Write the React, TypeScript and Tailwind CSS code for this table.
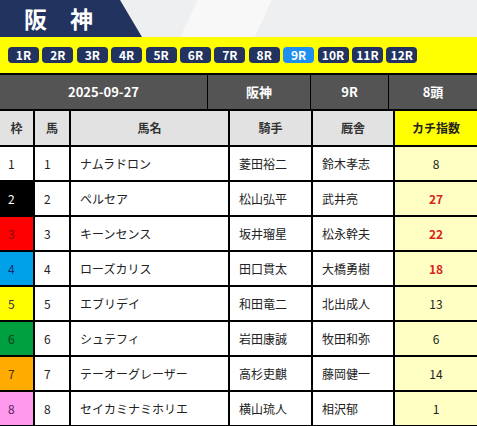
const races = ["1R", "2R", "3R", "4R", "5R", "6R", "7R", "8R", "9R", "10R", "11R", "12R"];

type Horse = {
  waku: number;
  num: number;
  name: string;
  jockey: string;
  trainer: string;
  score: number;
  hot?: boolean;
};

const horses: Horse[] = [
  { waku: 1, num: 1, name: "ナムラドロン", jockey: "菱田裕二", trainer: "鈴木孝志", score: 8 },
  { waku: 2, num: 2, name: "ペルセア", jockey: "松山弘平", trainer: "武井亮", score: 27, hot: true },
  { waku: 3, num: 3, name: "キーンセンス", jockey: "坂井瑠星", trainer: "松永幹夫", score: 22, hot: true },
  { waku: 4, num: 4, name: "ローズカリス", jockey: "田口貫太", trainer: "大橋勇樹", score: 18, hot: true },
  { waku: 5, num: 5, name: "エブリデイ", jockey: "和田竜二", trainer: "北出成人", score: 13 },
  { waku: 6, num: 6, name: "シュテフィ", jockey: "岩田康誠", trainer: "牧田和弥", score: 6 },
  { waku: 7, num: 7, name: "テーオーグレーザー", jockey: "高杉吏麒", trainer: "藤岡健一", score: 14 },
  { waku: 8, num: 8, name: "セイカミナミホリエ", jockey: "横山琉人", trainer: "相沢郁", score: 1 },
];

const wakuStyle: Record<number, string> = {
  1: "bg-white text-[#222]",
  2: "bg-black text-white",
  3: "bg-[#ff0000] text-[#7a1010]",
  4: "bg-[#00a0e9] text-[#14306a]",
  5: "bg-[#ffff00] text-[#333]",
  6: "bg-[#00a040] text-[#0d3b1e]",
  7: "bg-[#ffab00] text-[#4a3200]",
  8: "bg-[#ff99ee] text-[#5a1e55]",
};

const cols = "grid grid-cols-[35px_36px_159px_83px_82px_1fr]";

export default function App() {
  return (
    <div className="w-[477px] h-[426px] overflow-hidden bg-white font-['Noto_Sans_CJK_JP','Noto_Sans',sans-serif]">
      {/* title band */}
      <div className="relative h-[37px] bg-[#eeeff0]">
        <div className="absolute inset-0 bg-[linear-gradient(115deg,transparent_0,transparent_40%,#f8f8f8_40%,#f8f8f8_55%,transparent_55%)]" />
        <div className="absolute inset-0 bg-[#22335f] [clip-path:polygon(0_0,120px_0,142px_100%,0_100%)]" />
        <h1 className="relative pl-[24px] pt-[3px] text-[23px] font-bold leading-[30px] tracking-[1em] text-white">
          阪神
        </h1>
      </div>

      {/* race selector */}
      <div className="flex h-[36px] items-center gap-[3.4px] bg-[#ffff00] pl-[8px]">
        {races.map((r) => (
          <span
            key={r}
            className={`flex h-[16px] w-[31px] items-center justify-center rounded-[4px] text-[12px] font-bold leading-none text-white ${
              r === "9R" ? "bg-[#1e8ff0]" : "bg-[#22335f]"
            }`}
          >
            {r}
          </span>
        ))}
      </div>

      {/* race info */}
      <div className="grid h-[38px] grid-cols-[208px_103px_78px_1fr] border-y-2 border-black bg-[#545454] text-[13px] font-bold text-white">
        <div className="flex items-center justify-center border-r border-black">2025-09-27</div>
        <div className="flex items-center justify-center border-r border-black">阪神</div>
        <div className="flex items-center justify-center border-r border-black">9R</div>
        <div className="flex items-center justify-center">8頭</div>
      </div>

      {/* column header */}
      <div className={`${cols} h-[36px] border-b-2 border-black bg-[#e2e2e2] text-[12px] font-bold text-[#333]`}>
        <div className="flex items-center justify-center border-r-2 border-black">枠</div>
        <div className="flex items-center justify-center border-r-2 border-black">馬</div>
        <div className="flex items-center justify-center border-r-2 border-black">馬名</div>
        <div className="flex items-center justify-center border-r-2 border-black">騎手</div>
        <div className="flex items-center justify-center border-r-2 border-black">厩舎</div>
        <div className="flex items-center justify-center bg-[#ffff00] text-[#222]">カチ指数</div>
      </div>

      {horses.map((h) => (
        <div key={h.num} className={`${cols} h-[35px] border-b-2 border-black text-[12px] text-[#222]`}>
          <div className={`flex items-center border-r-2 border-black pl-[8px] ${wakuStyle[h.waku]}`}>{h.waku}</div>
          <div className="flex items-center border-r-2 border-black pl-[9px]">{h.num}</div>
          <div className="flex items-center border-r-2 border-black pl-[9px]">{h.name}</div>
          <div className="flex items-center border-r-2 border-black pl-[9px]">{h.jockey}</div>
          <div className="flex items-center border-r-2 border-black pl-[9px]">{h.trainer}</div>
          <div
            className={`flex items-center justify-center bg-[#ffffc4] ${h.hot ? "font-bold text-[#d8261c]" : ""}`}
          >
            {h.score}
          </div>
        </div>
      ))}
    </div>
  );
}
